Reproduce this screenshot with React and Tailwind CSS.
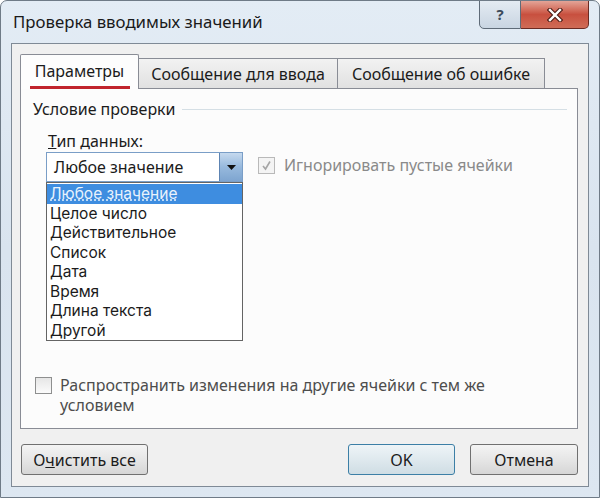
import React from "react";

const font = { fontFamily: '"Noto Sans", "Open Sans", sans-serif' };

function Checkbox({ checked, disabled }) {
  return (
    <div
      className={
        "w-[17px] h-[17px] border flex items-center justify-center shrink-0 " +
        (disabled ? "border-[#b9b9b9] bg-[#f4f4f4]" : "border-[#8e8f8f] bg-gradient-to-b from-[#e6e6e6] to-[#fbfbfb]")
      }
    >
      {checked && (
        <svg width="11" height="11" viewBox="0 0 11 11">
          <path d="M2 6 L4.5 9 L9 1.5" stroke="#a5a5a5" strokeWidth="1.6" fill="none" />
        </svg>
      )}
    </div>
  );
}

const items = [
  "Любое значение",
  "Целое число",
  "Действительное",
  "Список",
  "Дата",
  "Время",
  "Длина текста",
  "Другой",
];

export default function App() {
  return (
    <div
      className="w-[600px] h-[498px] flex flex-col bg-gradient-to-b from-[#e3ecf5] via-[#d9e4ef] to-[#dde7f1] border border-[#6f7b87] rounded-t-[7px] overflow-hidden text-[16px] text-[#1b1b1b]"
      style={font}
    >
      {/* Title bar */}
      <div className="h-[42px] flex items-start justify-between shrink-0">
        <div className="pl-[12px] pt-[9px] text-[16.8px] text-[#1a1a1a] leading-[24px]">
          Проверка вводимых значений
        </div>
        <div className="flex mr-[10px] -mt-px">
          <div className="w-[42px] h-[29px] border border-[#5f6b78] rounded-bl-[5px] bg-gradient-to-b from-[#e4ebf2] to-[#c9d5e2] flex items-center justify-center text-[#3c4a5a] text-[15px] font-bold">
            ?
          </div>
          <div className="w-[68px] h-[29px] border border-l-0 border-[#6b2a22] rounded-br-[5px] bg-gradient-to-b from-[#e3a497] via-[#c8503f] to-[#cf6c57] flex items-center justify-center">
            <svg width="16" height="14" viewBox="0 0 16 14">
              <path d="M3 2 L13 12 M13 2 L3 12" stroke="#4a1b14" strokeWidth="4.5" strokeLinecap="square" />
              <path d="M3 2 L13 12 M13 2 L3 12" stroke="#ffffff" strokeWidth="2.4" strokeLinecap="square" />
            </svg>
          </div>
        </div>
      </div>

      {/* Content */}
      <div className="flex-1 ml-[10px] mr-[10px] mb-[10px] border border-[#7f8a96] bg-[#f0f0f0] flex flex-col pl-[8px] pr-[10px] pt-[10px]">
        {/* Tabs */}
        <div className="flex items-end h-[34px] relative z-10">
          <div className="w-[119px] h-[35px] -mb-px border border-b-0 border-[#898c95] bg-[#fdfdfd] rounded-t-[2px] flex flex-col items-center pt-[6px]">
            <span className="leading-[20px]">Параметры</span>
            <div className="mt-[5px] w-[100px] h-[3px] bg-[#c0242c]" />
          </div>
          <div className="w-[199px] h-[30px] border border-l-0 border-b-0 border-[#898c95] bg-gradient-to-b from-[#f2f2f2] to-[#e1e1e1] flex items-center justify-center">
            Сообщение для ввода
          </div>
          <div className="w-[207px] h-[30px] border border-l-0 border-b-0 border-[#898c95] bg-gradient-to-b from-[#f2f2f2] to-[#e1e1e1] flex items-center justify-center">
            Сообщение об ошибке
          </div>
        </div>

        {/* Tab panel */}
        <div className="h-[341px] border border-[#898c95] bg-[#fcfcfc] flex flex-col pl-[12px] pr-[10px]">
          <div className="flex items-center mt-[9px] h-[22px]">
            <span>Условие проверки</span>
            <div className="flex-1 ml-[6px] h-px bg-[#d5dfe5]" />
          </div>
          <div className="pl-[15px] mt-[11px] leading-[20px]">
            <span className="underline">Т</span>ип данных:
          </div>
          <div className="flex items-start mt-[1px]">
            <div className="relative ml-[13px] w-[197px] h-[30px] border border-[#7a9ec7] bg-white flex">
              <div className="flex-1 flex items-center pl-[7px]">Любое значение</div>
              <div className="w-[23px] h-full border-l border-[#5d84b3] bg-gradient-to-b from-[#c5d9ee] via-[#97b9dd] to-[#7ea5d0] flex items-center justify-center">
                <svg width="9" height="5" viewBox="0 0 9 5">
                  <path d="M0 0 L9 0 L4.5 5 Z" fill="#111" />
                </svg>
              </div>
              {/* Dropdown list */}
              <div
                className="absolute left-[-1px] top-[29px] w-[197px] h-[159px] border border-[#646464] bg-white z-20 flex flex-col pt-[1px] text-[15.5px]"
                style={{ fontFamily: 'Inter, "Noto Sans", sans-serif' }}
              >
                {items.map((it, i) => (
                  <div
                    key={it}
                    className={
                      "h-[19.5px] leading-[19.5px] pl-[3px] " +
                      (i === 0 ? "bg-[#3e8de0] text-[#e8f2fc] underline decoration-dotted" : "")
                    }
                  >
                    {it}
                  </div>
                ))}
              </div>
            </div>
            <div className="flex items-center ml-[15px] mt-[3px] gap-[9px] text-[#8a8a8a]">
              <Checkbox checked disabled />
              <span className="leading-[20px]">Игнорировать пустые ячейки</span>
            </div>
          </div>

          <div className="flex-1" />
          <div className="flex items-start gap-[8px] pl-[2px] mb-[13px] text-[#4d4d4d]">
            <div className="mt-[2px]">
              <Checkbox />
            </div>
            <div className="leading-[20px]">
              Распространить изменения на другие ячейки с тем же
              <br />
              условием
            </div>
          </div>
        </div>

        {/* Buttons */}
        <div className="flex items-center mt-[15px]">
          <div className="ml-[1px] w-[127px] h-[31px] border border-[#707070] rounded-[3px] bg-gradient-to-b from-[#f4f4f4] via-[#e6e6e6] to-[#d6d6d6] flex items-center justify-center">
            <span>
              О<span className="underline">ч</span>истить все
            </span>
          </div>
          <div className="flex-1" />
          <div className="w-[107px] h-[31px] border border-[#3c7fa6] rounded-[3px] bg-gradient-to-b from-[#eef4f7] via-[#dfe9ee] to-[#cfdde4] flex items-center justify-center">
            OK
          </div>
          <div className="ml-[15px] w-[108px] h-[31px] border border-[#707070] rounded-[3px] bg-gradient-to-b from-[#f4f4f4] via-[#e6e6e6] to-[#d6d6d6] flex items-center justify-center">
            Отмена
          </div>
        </div>
      </div>
    </div>
  );
}
